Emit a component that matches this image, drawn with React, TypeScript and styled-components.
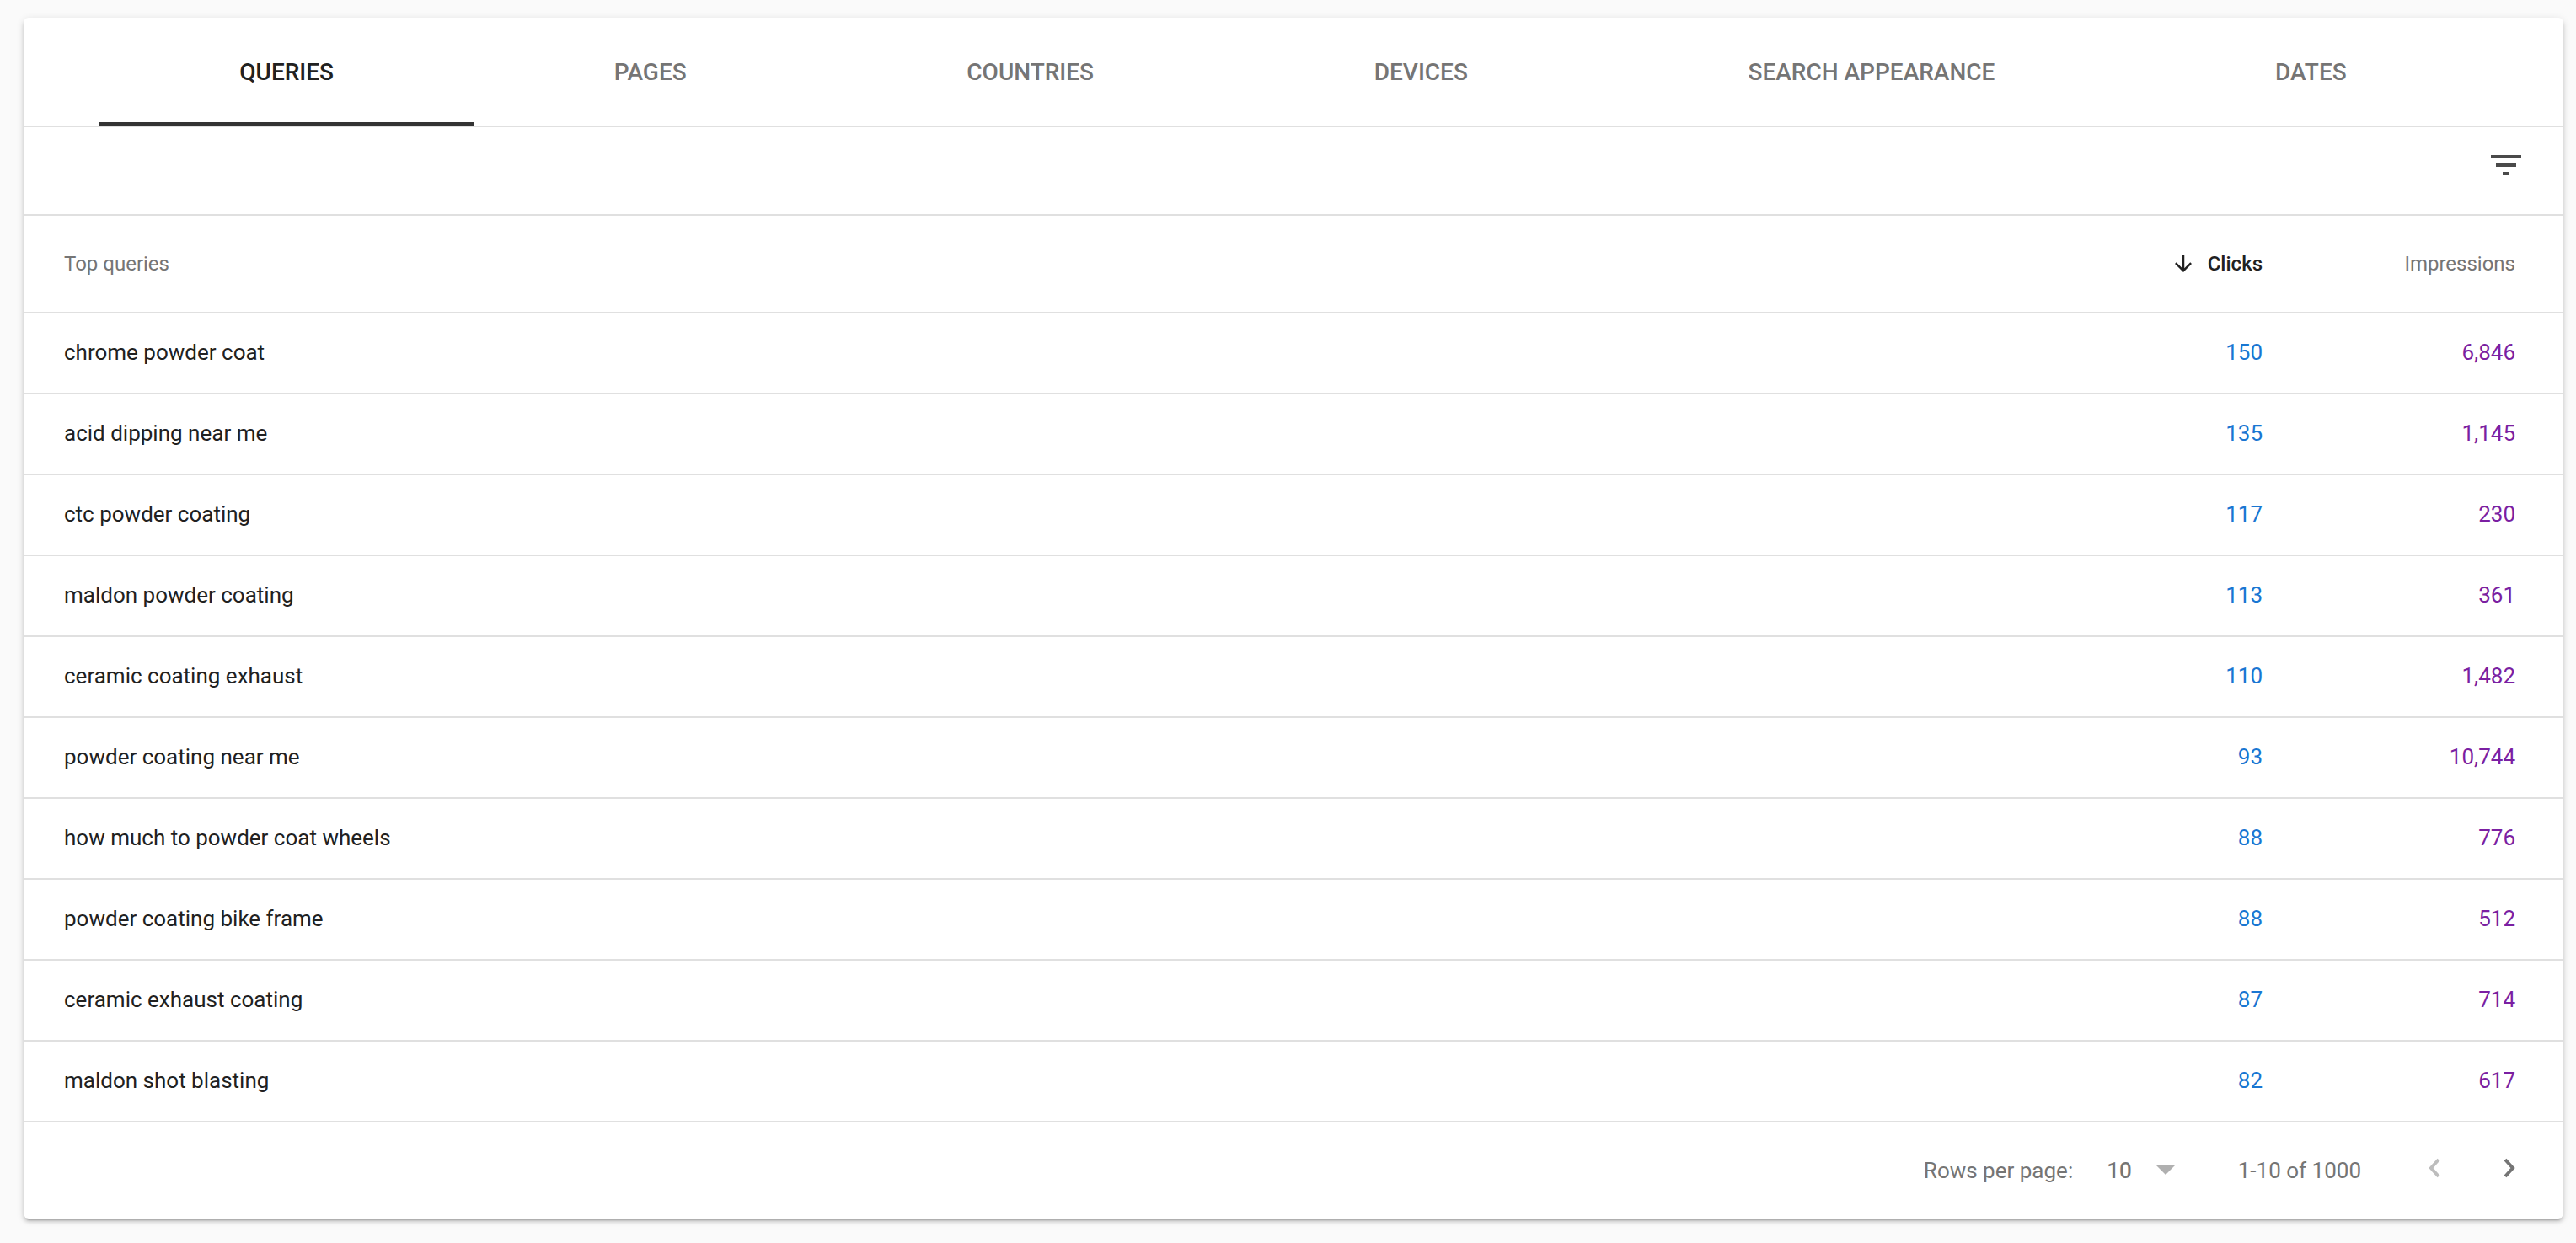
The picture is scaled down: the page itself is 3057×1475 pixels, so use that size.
import React from "react";
import styled, { createGlobalStyle } from "styled-components";

const Global = createGlobalStyle`
  html, body { margin: 0; padding: 0; background: #fafafa; }
  body { font-family: Roboto, "Liberation Sans", sans-serif; -webkit-font-smoothing: antialiased; }
`;

const Card = styled.section`
  margin: 21px 15px 29px 28px;
  height: 1425px;
  box-sizing: border-box;
  background: #fff;
  border-radius: 6px;
  box-shadow: 0 4px 4px 0 rgba(0,0,0,.14), 0 6px 2px -4px rgba(0,0,0,.2), 0 2px 10px 0 rgba(0,0,0,.12);
  display: flex;
  flex-direction: column;
  overflow: hidden;
`;

const TabBar = styled.nav`
  height: 130px;
  box-sizing: border-box;
  border-bottom: 2px solid #e0e0e0;
  padding: 0 91px 0 90px;
  display: flex;
`;

const Tab = styled.div<{ $active?: boolean }>`
  flex: 1 1 auto;
  display: flex;
  align-items: center;
  justify-content: center;
  padding: 1px 160px 0;
  font-size: 28px;
  font-weight: 500;
  color: ${(p) => (p.$active ? "#212121" : "#757575")};
  box-shadow: ${(p) => (p.$active ? "inset 0 -4px 0 #333" : "none")};
  white-space: nowrap;
`;

const Toolbar = styled.div`
  height: 105px;
  box-sizing: border-box;
  border-bottom: 2px solid #e0e0e0;
  padding: 0 44px 14px 0;
  display: flex;
  justify-content: flex-end;
  align-items: center;
`;

const Row = styled.div<{ $header?: boolean }>`
  height: ${(p) => (p.$header ? 116 : 96)}px;
  box-sizing: border-box;
  border-bottom: 2px solid #e0e0e0;
  padding: 0 57px 0 48px;
  display: grid;
  grid-template-columns: 1fr 200px 300px;
  align-items: center;
`;

const Query = styled.div`
  font-size: 26px;
  color: #212121;
  padding-bottom: 2px;
`;

const Value = styled.div<{ $color: string }>`
  font-size: 26px;
  text-align: right;
  color: ${(p) => p.$color};
  padding-bottom: 2px;
`;

const HeadLabel = styled.div<{ $align?: string; $active?: boolean }>`
  font-size: 24px;
  font-weight: ${(p) => (p.$active ? 500 : 400)};
  color: ${(p) => (p.$active ? "#212121" : "#757575")};
  display: flex;
  align-items: center;
  justify-content: ${(p) => p.$align || "flex-start"};
  gap: 14px;
`;

const Footer = styled.footer`
  flex: 1;
  display: flex;
  justify-content: flex-end;
  align-items: center;
  padding-right: 56px;
  color: #757575;
  font-size: 26px;
`;

const RowsLabel = styled.span`
  margin-right: 40px;
`;

const RowsValue = styled.span`
  font-weight: 500;
  margin-right: 28px;
`;

const Triangle = styled.span`
  width: 0;
  height: 0;
  border-left: 12px solid transparent;
  border-right: 12px solid transparent;
  border-top: 12px solid #b0b0b0;
  margin-right: 74px;
  margin-top: -2px;
`;

const Range = styled.span`
  margin-right: 79px;
`;

const Chevron = styled.svg<{ $gap?: number }>`
  width: 15px;
  height: 24px;
  margin-bottom: 7px;
  margin-right: ${(p) => p.$gap || 0}px;
`;

const rows: [string, string, string][] = [
  ["chrome powder coat", "150", "6,846"],
  ["acid dipping near me", "135", "1,145"],
  ["ctc powder coating", "117", "230"],
  ["maldon powder coating", "113", "361"],
  ["ceramic coating exhaust", "110", "1,482"],
  ["powder coating near me", "93", "10,744"],
  ["how much to powder coat wheels", "88", "776"],
  ["powder coating bike frame", "88", "512"],
  ["ceramic exhaust coating", "87", "714"],
  ["maldon shot blasting", "82", "617"],
];

const tabs = ["QUERIES", "PAGES", "COUNTRIES", "DEVICES", "SEARCH APPEARANCE", "DATES"];

export default function App() {
  return (
    <>
      <Global />
      <Card>
        <TabBar>
          {tabs.map((t, i) => (
            <Tab key={t} $active={i === 0}>{t}</Tab>
          ))}
        </TabBar>
        <Toolbar>
          <svg width="48" height="48" viewBox="0 0 24 24" fill="#4a4a4a">
            <path d="M10 18h4v-2h-4v2zM3 6v2h18V6H3zm3 7h12v-2H6v2z" />
          </svg>
        </Toolbar>
        <Row $header>
          <HeadLabel>Top queries</HeadLabel>
          <HeadLabel $align="flex-end" $active>
            <svg width="30" height="30" viewBox="0 0 24 24" fill="#212121">
              <path d="M20 12l-1.41-1.41L13 16.17V4h-2v12.17l-5.58-5.59L4 12l8 8 8-8z" />
            </svg>
            Clicks
          </HeadLabel>
          <HeadLabel $align="flex-end">Impressions</HeadLabel>
        </Row>
        {rows.map(([q, c, i]) => (
          <Row key={q}>
            <Query>{q}</Query>
            <Value $color="#1976d2">{c}</Value>
            <Value $color="#7b1fa2">{i}</Value>
          </Row>
        ))}
        <Footer>
          <RowsLabel>Rows per page:</RowsLabel>
          <RowsValue>10</RowsValue>
          <Triangle />
          <Range>1-10 of 1000</Range>
          <Chevron $gap={75} viewBox="0 0 15 24" fill="none" stroke="#bdbdbd" strokeWidth="4">
            <path d="M13 2 L4 12 L13 22" />
          </Chevron>
          <Chevron viewBox="0 0 15 24" fill="none" stroke="#757575" strokeWidth="4">
            <path d="M2 2 L11 12 L2 22" />
          </Chevron>
        </Footer>
      </Card>
    </>
  );
}
